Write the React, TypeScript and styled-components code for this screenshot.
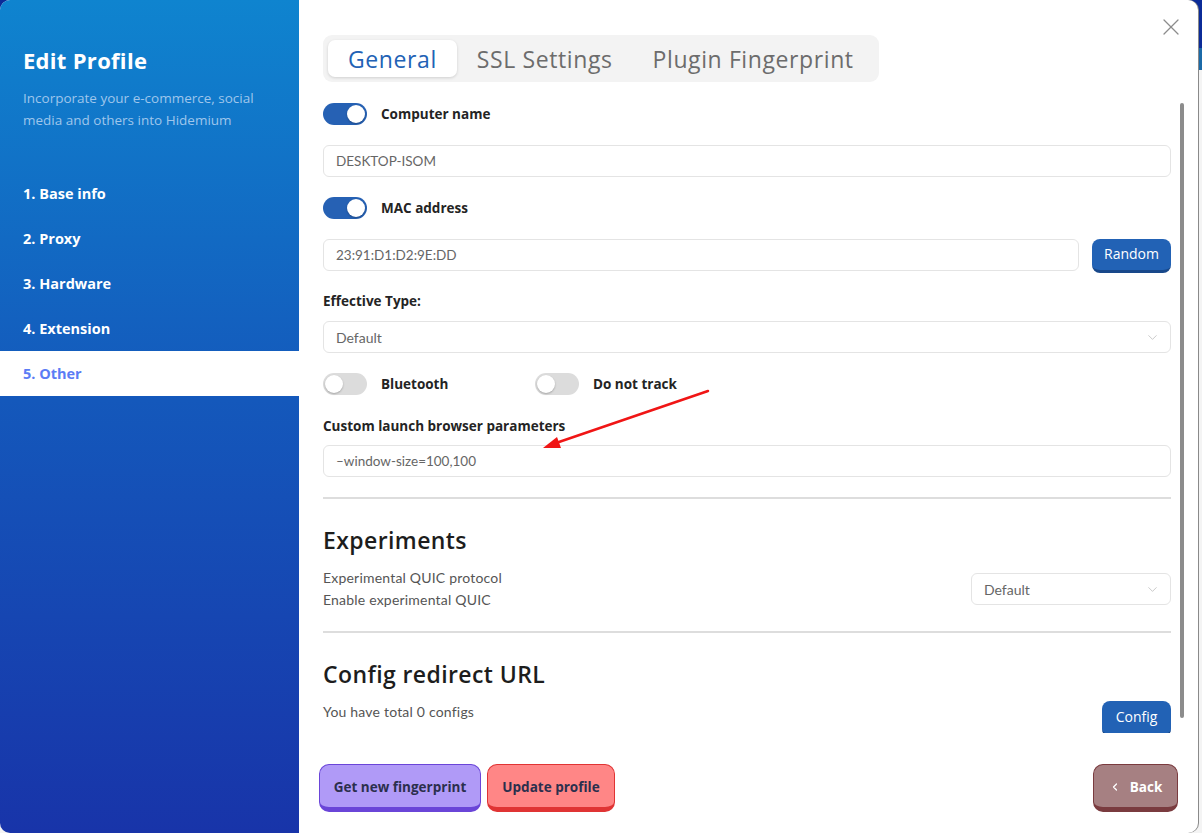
import React from "react";
import styled, { createGlobalStyle } from "styled-components";
import { ChevronDown, ChevronLeft, X } from "lucide-react";

const SANS = `Lato, "Noto Sans", sans-serif`;
const WIDE = `"Open Sans", "Noto Sans", sans-serif`;

const Global = createGlobalStyle`
  html, body { margin: 0; padding: 0; }
  body {
    font-family: ${SANS};
    width: 1202px;
    height: 833px;
    overflow: hidden;
  }
  * { box-sizing: border-box; }
`;

const Page = styled.div`
  position: relative;
  width: 1202px;
  height: 833px;
  display: flex;
  background: linear-gradient(180deg, #0b2b98 0 48px, #1b6aa8 48px 70px, #f4f4f4 70px);
`;

const Modal = styled.div`
  width: 1198px;
  height: 833px;
  display: flex;
  border-radius: 10px;
  overflow: hidden;
  background: #fff;
  box-shadow: 1px 0 0 #8a8a8a;
`;

const Sidebar = styled.aside`
  width: 299px;
  flex: none;
  display: flex;
  flex-direction: column;
  padding-top: 45px;
  background: linear-gradient(180deg, #0f84cf 0%, #1458bb 48%, #1834a9 100%);
`;

const SideTitle = styled.h1`
  margin: 0;
  padding: 0 23px;
  font-family: ${WIDE};
  font-size: 22px;
  line-height: 30px;
  font-weight: 700;
  letter-spacing: 0.3px;
  color: #fff;
`;

const SideSub = styled.p`
  margin: 12px 0 0;
  padding: 0 23px;
  font-family: ${WIDE};
  font-size: 13.5px;
  line-height: 22px;
  color: #9fc6ec;
`;

const Nav = styled.nav`
  margin-top: 40px;
  display: flex;
  flex-direction: column;
`;

const NavItem = styled.div<{ $active?: boolean }>`
  height: 45px;
  display: flex;
  align-items: center;
  padding: 0 23px;
  font-family: ${WIDE};
  font-size: 14.5px;
  font-weight: 700;
  color: ${(p) => (p.$active ? "#5b7cf5" : "#fff")};
  background: ${(p) => (p.$active ? "#fff" : "transparent")};
`;

const Main = styled.section`
  position: relative;
  flex: 1;
  display: flex;
  flex-direction: column;
  padding-top: 35px;
`;

const CloseBtn = styled.div`
  position: absolute;
  top: 13px;
  right: 13px;
  color: #8c8c8c;
  display: flex;
`;

const TabsWrap = styled.div`
  padding: 0 24px;
  display: flex;
`;

const Tabs = styled.div`
  display: flex;
  padding: 5px;
  background: #f3f3f3;
  border-radius: 9px;
`;

const Tab = styled.div<{ $active?: boolean }>`
  height: 37px;
  padding: 0 20px;
  display: flex;
  align-items: center;
  font-family: ${WIDE};
  font-size: 23px;
  letter-spacing: 0.6px;
  font-weight: 400;
  border-radius: 7px;
  color: ${(p) => (p.$active ? "#2262b5" : "#6c6c6c")};
  background: ${(p) => (p.$active ? "#fff" : "transparent")};
  box-shadow: ${(p) => (p.$active ? "0 1px 3px rgba(0,0,0,0.15)" : "none")};
`;

const Scroll = styled.div`
  position: relative;
  margin-top: 21px;
  height: 630px;
  flex: none;
  overflow: hidden;
  padding: 0 27px 0 24px;
  display: flex;
  flex-direction: column;
  & > * {
    flex-shrink: 0;
  }
`;

const Thumb = styled.div`
  position: absolute;
  top: 0;
  right: 14px;
  width: 4px;
  height: 615px;
  border-radius: 2px;
  background: #8c8c8c;
`;

const ToggleRow = styled.div<{ $mt?: number }>`
  display: flex;
  align-items: center;
  gap: 14px;
  margin-top: ${(p) => p.$mt ?? 0}px;
`;

const Pair = styled.div<{ $w?: number }>`
  display: flex;
  align-items: center;
  gap: 14px;
  width: ${(p) => (p.$w ? `${p.$w}px` : "auto")};
`;

const Track = styled.div<{ $on?: boolean }>`
  position: relative;
  width: 44px;
  height: 22px;
  border-radius: 11px;
  flex: none;
  background: ${(p) => (p.$on ? "#2661b4" : "#dcdcdc")};
`;

const Knob = styled.div<{ $on?: boolean }>`
  position: absolute;
  top: 2px;
  left: ${(p) => (p.$on ? "24px" : "2px")};
  width: 18px;
  height: 18px;
  border-radius: 50%;
  background: #fff;
  box-shadow: 0 1px 2px rgba(0, 0, 0, 0.25);
`;

const Label = styled.div<{ $mt?: number }>`
  font-family: ${WIDE};
  font-size: 13.5px;
  line-height: 20px;
  font-weight: 700;
  color: #242424;
  margin-top: ${(p) => p.$mt ?? 0}px;
`;

const Field = styled.input<{ $mt?: number }>`
  display: block;
  width: 100%;
  min-width: 0;
  height: 32px;
  margin-top: ${(p) => p.$mt ?? 0}px;
  padding: 0 12px;
  border: 1px solid #e4e4e4;
  border-radius: 6px;
  font-family: ${SANS};
  font-size: 13.5px;
  color: #666;
  background: #fff;
  outline: none;
`;

const FieldRow = styled.div<{ $mt?: number }>`
  display: flex;
  align-items: flex-start;
  gap: 13px;
  margin-top: ${(p) => p.$mt ?? 0}px;
`;

const SelectBox = styled.div<{ $mt?: number; $w?: string }>`
  width: ${(p) => p.$w ?? "100%"};
  flex: none;
  height: 32px;
  margin-top: ${(p) => p.$mt ?? 0}px;
  padding: 0 10px 0 12px;
  display: flex;
  align-items: center;
  justify-content: space-between;
  border: 1px solid #e4e4e4;
  border-radius: 6px;
  font-size: 14px;
  color: #666;
  background: #fff;
`;

const BlueBtn = styled.div<{ $w: number; $h: number }>`
  flex: none;
  width: ${(p) => p.$w}px;
  height: ${(p) => p.$h}px;
  display: flex;
  align-items: center;
  justify-content: center;
  padding-bottom: 2px;
  border-radius: 8px;
  background: #2262b5;
  border-bottom: 3px solid #18488a;
  color: #fff;
  font-family: ${WIDE};
  font-size: 14px;
  font-weight: 500;
`;

const Divider = styled.hr<{ $mt: number }>`
  margin: ${(p) => p.$mt}px 0 0;
  border: none;
  height: 2px;
  background: #dddddd;
`;

const Heading = styled.h2<{ $mt: number }>`
  margin: ${(p) => p.$mt}px 0 0;
  font-family: ${WIDE};
  font-size: 23px;
  line-height: 30px;
  letter-spacing: 0.4px;
  font-weight: 600;
  color: #1d1d1d;
`;

const InfoRow = styled.div<{ $mt: number; $align?: string }>`
  display: flex;
  justify-content: space-between;
  align-items: ${(p) => p.$align ?? "center"};
  margin-top: ${(p) => p.$mt}px;
`;

const Muted = styled.div`
  font-size: 14px;
  line-height: 22px;
  letter-spacing: 0.2px;
  color: #555;
`;

const Footer = styled.div`
  margin-top: 31px;
  padding: 0 20px;
  display: flex;
  align-items: flex-start;
  gap: 6px;
`;

const ActionBtn = styled.div<{ $bg: string; $bd: string; $fg: string; $w: number }>`
  width: ${(p) => p.$w}px;
  height: 48px;
  display: flex;
  align-items: center;
  justify-content: center;
  gap: 9px;
  padding-top: 1px;
  border-radius: 10px;
  background: ${(p) => p.$bg};
  border: 1px solid ${(p) => p.$bd};
  border-bottom-width: 5px;
  color: ${(p) => p.$fg};
  font-family: ${WIDE};
  font-size: 13.5px;
  font-weight: 700;
`;

const Spacer = styled.div`
  flex: 1;
`;

const Arrow = styled.svg`
  position: absolute;
  left: 0;
  top: 0;
  pointer-events: none;
`;

export default function App() {
  return (
    <>
      <Global />
      <Page>
        <Modal>
          <Sidebar>
            <SideTitle>Edit Profile</SideTitle>
            <SideSub>
              Incorporate your e-commerce, social
              <br />
              media and others into Hidemium
            </SideSub>
            <Nav>
              <NavItem>1. Base info</NavItem>
              <NavItem>2. Proxy</NavItem>
              <NavItem>3. Hardware</NavItem>
              <NavItem>4. Extension</NavItem>
              <NavItem $active>5. Other</NavItem>
            </Nav>
          </Sidebar>
          <Main>
            <CloseBtn>
              <X size={28} strokeWidth={1.1} />
            </CloseBtn>
            <TabsWrap>
              <Tabs>
                <Tab $active>General</Tab>
                <Tab>SSL Settings</Tab>
                <Tab>Plugin Fingerprint</Tab>
              </Tabs>
            </TabsWrap>
            <Scroll>
              <Thumb />
              <ToggleRow>
                <Track $on>
                  <Knob $on />
                </Track>
                <Label>Computer name</Label>
              </ToggleRow>
              <Field $mt={20} readOnly value="DESKTOP-ISOM" />
              <ToggleRow $mt={20}>
                <Track $on>
                  <Knob $on />
                </Track>
                <Label>MAC address</Label>
              </ToggleRow>
              <FieldRow $mt={20}>
                <Field readOnly value="23:91:D1:D2:9E:DD" />
                <BlueBtn $w={79} $h={34}>Random</BlueBtn>
              </FieldRow>
              <Label $mt={18}>Effective Type:</Label>
              <SelectBox $mt={10}>
                <span>Default</span>
                <ChevronDown size={15} strokeWidth={1} color="#aaa" />
              </SelectBox>
              <ToggleRow $mt={20}>
                <Pair $w={198}>
                  <Track>
                    <Knob />
                  </Track>
                  <Label>Bluetooth</Label>
                </Pair>
                <Pair>
                  <Track>
                    <Knob />
                  </Track>
                  <Label>Do not track</Label>
                </Pair>
              </ToggleRow>
              <Label $mt={21}>Custom launch browser parameters</Label>
              <Field $mt={9} readOnly value="–window-size=100,100" />
              <Divider $mt={20} />
              <Heading $mt={26}>Experiments</Heading>
              <InfoRow $mt={12}>
                <div>
                  <Muted>Experimental QUIC protocol</Muted>
                  <Muted>Enable experimental QUIC</Muted>
                </div>
                <SelectBox $w="200px">
                  <span>Default</span>
                  <ChevronDown size={15} strokeWidth={1} color="#aaa" />
                </SelectBox>
              </InfoRow>
              <Divider $mt={20} />
              <Heading $mt={26}>Config redirect URL</Heading>
              <InfoRow $mt={12} $align="flex-start">
                <Muted>You have total 0 configs</Muted>
                <BlueBtn $w={69} $h={36}>Config</BlueBtn>
              </InfoRow>
            </Scroll>
            <Footer>
              <ActionBtn $w={162} $bg="#b09af7" $bd="#6a45d8" $fg="#2b2f4d">
                Get new fingerprint
              </ActionBtn>
              <ActionBtn $w={128} $bg="#ff8686" $bd="#e03434" $fg="#2b2f4d">
                Update profile
              </ActionBtn>
              <Spacer />
              <ActionBtn $w={85} $bg="#a68082" $bd="#7a3b3f" $fg="#fff">
                <ChevronLeft size={12} strokeWidth={2.5} />
                <span>Back</span>
              </ActionBtn>
            </Footer>
          </Main>
        </Modal>
        <Arrow width="1202" height="833" viewBox="0 0 1202 833">
          <line x1="708" y1="391" x2="556" y2="443" stroke="#f01515" strokeWidth="2.5" strokeLinecap="round" />
          <polygon points="543,448 557,437 561,448" fill="#f01515" />
        </Arrow>
      </Page>
    </>
  );
}
